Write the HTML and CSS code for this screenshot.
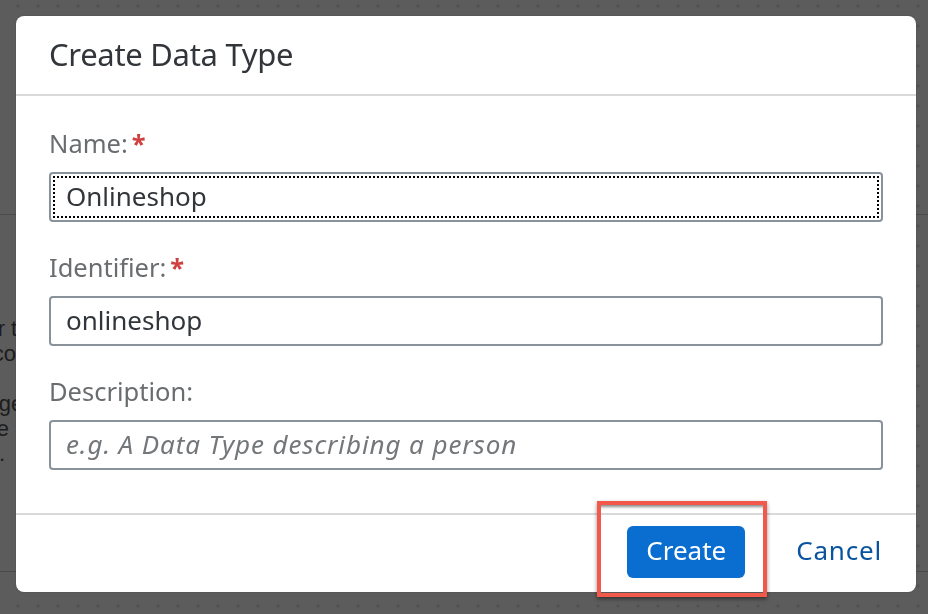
FILE: index.html
```html
<!DOCTYPE html>
<html lang="en">
<head>
<meta charset="utf-8">
<title>Create Data Type</title>
<link rel="stylesheet" href="styles.css">
</head>
<body>
<div class="page">
  <div class="page-top"></div>
  <div class="page-panel">
    <p class="page-line w5"><span class="pre">Choose a data type for</span><span class="post">&nbsp;the new entity</span></p>
    <p class="page-line w16"><span class="pre">and define its co</span><span class="post">ntent</span></p>
    <p class="page-line w11 gap"><span class="pre">Data types can be manag</span><span class="post">ed</span></p>
    <p class="page-line w9"><span class="pre">assigned to the</span><span class="post">&nbsp;package</span></p>
    <p class="page-line w5"><span class="pre">of the model.</span><span class="post"></span></p>
  </div>
</div>
<div class="overlay">
  <div class="dialog" role="dialog" aria-labelledby="dlg-title">
    <header class="dialog-header">
      <h1 id="dlg-title" class="dialog-title">Create Data Type</h1>
    </header>
    <div class="dialog-content">
      <div class="field">
        <label class="field-label" for="f-name">Name:<span class="req">*</span></label>
        <div class="input input-focus"><span class="input-inner" id="f-name">Onlineshop</span></div>
      </div>
      <div class="field">
        <label class="field-label" for="f-id">Identifier:<span class="req">*</span></label>
        <div class="input"><span class="input-inner" id="f-id">onlineshop</span></div>
      </div>
      <div class="field">
        <label class="field-label" for="f-desc">Description:</label>
        <div class="input"><span class="input-inner placeholder" id="f-desc">e.g. A Data Type describing a person</span></div>
      </div>
    </div>
    <footer class="dialog-footer">
      <button class="btn btn-emph" type="button">Create</button>
      <button class="btn btn-trans" type="button">Cancel</button>
    </footer>
  </div>
  <div class="highlight"></div>
</div>
</body>
</html>
```
FILE: styles.css
```css
* { box-sizing: border-box; }
html, body {
  margin: 0;
  height: 100%;
}
body {
  background-color: #5c5c5c;
  background-image: radial-gradient(circle, #525252 1.4px, transparent 1.8px);
  background-size: 20px 20px;
  background-position: 8px -4px;
  font-family: "Noto Sans", "Liberation Sans", sans-serif;
  overflow: hidden;
}

/* dimmed page underneath */
.page {
  height: 100%;
  display: flex;
  flex-direction: column;
}
.page-top {
  height: 215px;
  border-bottom: 1px solid #4a4a4a;
  flex: none;
}
.page-panel {
  height: 357px;
  border-bottom: 1px solid #4a4a4a;
  padding-top: 101px;
  margin-left: -300px;
  color: #1c1c1c;
  font-family: "Liberation Sans", sans-serif;
  font-size: 22px;
  line-height: 25px;
}
.page-line { margin: 0; white-space: nowrap; display: flex; }
.page-line .pre { text-align: right; flex: none; }
.page-line .post { white-space: pre; }
.w5 .pre { width: 305px; }
.w9 .pre { width: 309px; }
.w11 .pre { width: 311px; }
.w16 .pre { width: 316px; }
.page-line.gap { margin-top: 25px; }

/* dialog overlay */
.overlay {
  position: fixed;
  inset: 0;
  padding: 16px 12px 22px 16px;
}
.dialog {
  width: 900px;
  height: 576px;
  background: #fff;
  border-radius: 8px;
  display: flex;
  flex-direction: column;
  box-shadow: 0 0 2px rgba(0,0,0,0.2);
}
.dialog-header {
  height: 80px;
  border-bottom: 2px solid #d9d9d9;
  display: flex;
  align-items: center;
  padding: 0 33px 2px;
  flex: none;
}
.dialog-title {
  margin: 0;
  font-size: 31px;
  font-weight: 400;
  color: #32363a;
  letter-spacing: -0.3px;
}
.dialog-content {
  flex: 1;
  padding: 33px 33px 0;
}
.field { margin-bottom: 31px; }
.field-label {
  display: block;
  font-size: 25.5px;
  line-height: 28px;
  color: #6a6d70;
  margin-bottom: 15px;
}
.req {
  color: #d04040;
  font-weight: 700;
  margin-left: 4px;
}
.input {
  height: 50px;
  border: 2px solid #89919a;
  border-radius: 4px;
  background: #fff;
  padding: 2px;
  display: flex;
}
.input-inner {
  flex: 1;
  display: flex;
  align-items: center;
  padding-left: 11px;
  padding-bottom: 2px;
  font-size: 26px;
  color: #32363a;
  border: 2px dotted transparent;
  white-space: nowrap;
}
.input-focus .input-inner { border-color: #000; }
.placeholder {
  color: #74777a;
  font-style: italic;
  letter-spacing: 0.9px;
}
.dialog-footer {
  height: 79px;
  flex: none;
  border-top: 2px solid #d9d9d9;
  display: flex;
  align-items: center;
  justify-content: flex-end;
  padding: 0 24px 4px 0;
  gap: 41px;
}
.btn {
  font-family: inherit;
  font-size: 26px;
  border: none;
  border-radius: 6px;
  height: 52px;
  padding-bottom: 4px;
  cursor: pointer;
}
.btn-emph {
  background: #0a6ed1;
  color: #fff;
  width: 118px;
  padding-left: 0;
  padding-right: 0;
}
.btn-trans {
  background: transparent;
  color: #0854a0;
  padding-left: 10px;
  padding-right: 10px;
  letter-spacing: 0.8px;
}

/* annotation */
.highlight {
  position: absolute;
  left: 597px;
  top: 501px;
  width: 170px;
  height: 96px;
  border: 4px solid #f2594b;
  box-shadow: 0 2px 4px rgba(0,0,0,0.45), inset 0 5px 3px -3px rgba(0,0,0,0.45);
  pointer-events: none;
}
```
